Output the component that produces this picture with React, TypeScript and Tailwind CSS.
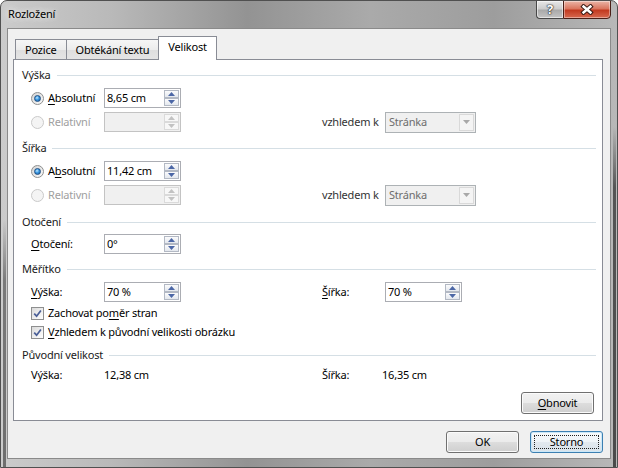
import React from "react";

type Kids = { children: React.ReactNode };

function Key({ children }: Kids) {
  return <span className="underline decoration-1 underline-offset-[2px]">{children}</span>;
}

function Arrow({ up, color }: { up?: boolean; color: string }) {
  return (
    <svg width="7" height="4" viewBox="0 0 7 4" className="block">
      <path d={up ? "M3.5 0L7 4H0Z" : "M0 0H7L3.5 4Z"} fill={color} />
    </svg>
  );
}

function SpinBox({ value, disabled }: { value?: string; disabled?: boolean }) {
  const arrow = disabled ? "#c2c2c2" : "#4c67a6";
  const half = disabled
    ? "flex flex-1 items-center justify-center border border-[#dadada] bg-[#f7f7f7]"
    : "flex flex-1 items-center justify-center border border-[#b3b9c4] bg-[linear-gradient(180deg,#fbfbfc,#e4e8ee)]";
  return (
    <div
      className={`flex h-[20px] w-[77px] border ${
        disabled ? "border-[#c3c3c3] bg-[#f0f0f0]" : "border-[#abadb3] bg-white"
      }`}
    >
      <div className="flex flex-1 items-center pl-[2px] text-black">{value}</div>
      <div className="flex w-[16px] flex-col py-px pr-px">
        <div className={half}>
          <Arrow up color={arrow} />
        </div>
        <div className={half}>
          <Arrow color={arrow} />
        </div>
      </div>
    </div>
  );
}

function Combo() {
  return (
    <div className="flex h-[21px] w-[91px] border border-[#adb2b5] bg-[#f0f0f0]">
      <div className="flex flex-1 items-center pl-[3px] text-[#6d6d6d]">Stránka</div>
      <div className="my-px mr-px flex w-[15px] items-center justify-center border border-[#d9d9d9] bg-[#f4f4f4]">
        <Arrow color="#a8a8a8" />
      </div>
    </div>
  );
}

function Radio({ on, disabled }: { on?: boolean; disabled?: boolean }) {
  return (
    <span
      className={`flex h-[13px] w-[13px] shrink-0 items-center justify-center rounded-full border ${
        disabled
          ? "border-[#cacaca] bg-[#f4f4f4]"
          : "border-[#8e8f8f] bg-[linear-gradient(135deg,#d4d4d4,#fbfbfb)]"
      }`}
    >
      {on && (
        <span className="h-[7px] w-[7px] rounded-full border border-[#1d4f85] bg-[radial-gradient(circle_at_40%_35%,#bfe8ff_0%,#3a97e0_45%,#14589c_100%)]" />
      )}
    </span>
  );
}

function Check() {
  return (
    <span className="flex h-[13px] w-[13px] shrink-0 items-center justify-center border border-[#8e8f8f] bg-[linear-gradient(135deg,#dadada,#ffffff)]">
      <svg width="9" height="9" viewBox="0 0 9 9" className="block">
        <path d="M1.2 4.6L3.6 7.2L7.9 1.4" fill="none" stroke="#4a5f97" strokeWidth="1.7" />
      </svg>
    </span>
  );
}

function Btn({ children, focused }: { children: React.ReactNode; focused?: boolean }) {
  return (
    <div
      className={`relative flex h-[22px] w-[73px] items-center justify-center rounded-[3px] border ${
        focused
          ? "border-[#3c7fb1] bg-[linear-gradient(180deg,#f7fafc_0%,#eef3f7_50%,#e2e9ef_50%,#d9e2ea_100%)] shadow-[inset_0_0_0_1px_#cbe8f8]"
          : "border-[#707070] bg-[linear-gradient(180deg,#f2f2f2_0%,#ebebeb_50%,#dddddd_50%,#cfcfcf_100%)] shadow-[inset_0_0_0_1px_#fbfbfb]"
      }`}
    >
      {focused && <span className="absolute inset-[3px] border border-dotted border-[#202020]" />}
      <span className="relative">{children}</span>
    </div>
  );
}

function Group({ title, className }: { title: string; className: string }) {
  return (
    <div className={`flex h-[16px] items-center pl-[8px] pr-[6px] ${className}`}>
      <span className="text-[#1a1a1a]">{title}</span>
      <span className="ml-[6px] h-px flex-1 bg-[#d5dfe5]" />
    </div>
  );
}

function Tab({ children, first }: { children: React.ReactNode; first?: boolean }) {
  return (
    <div
      className={`flex h-[20px] items-center border border-b-0 border-[#898c95] bg-[linear-gradient(180deg,#f6f6f6_0%,#ececec_50%,#dedede_50%,#e4e4e4_100%)] px-[9px] ${
        first ? "" : "-ml-px"
      }`}
    >
      {children}
    </div>
  );
}

export default function App() {
  return (
    <div className="flex h-[468px] w-[618px] flex-col overflow-hidden rounded-t-[7px] border border-[#505050] bg-[linear-gradient(180deg,transparent_27%,#555555_40%,#4a4a4a_100%),linear-gradient(180deg,transparent_47%,#7a7a7a_60%,#6e6e6e_100%),linear-gradient(90deg,#cbcbcb_0%,#b9b9b9_18%,#939393_40%,#aaaaaa_60%,#9d9d9d_80%,#b8b8b8_100%)] bg-no-repeat font-['Noto_Sans',sans-serif] text-[11px] leading-[16px] tracking-[-0.2px] text-black [background-position:right_1px_top,left_2px_top,0_0] [background-size:3px_100%,3px_100%,100%_100%]">
      {/* title bar */}
      <div className="flex h-[27px] shrink-0 items-start justify-between">
        <div className="pl-[7px] pt-[5px] [text-shadow:0_0_6px_rgba(255,255,255,0.9),0_0_10px_rgba(255,255,255,0.6)]">
          Rozložení
        </div>
        <div className="-mt-px mr-[6px] flex">
          <div className="flex h-[19px] w-[27px] items-center justify-center rounded-bl-[4px] border border-r-0 border-[#474747] bg-[linear-gradient(180deg,#e8e8e8_0%,#cdcdcd_45%,#aaaaaa_55%,#c4c4c4_100%)] shadow-[inset_0_0_0_1px_rgba(255,255,255,0.55)]">
            <span className="text-[13px] font-bold leading-none text-white [text-shadow:0_0_1px_#222,0_0_1px_#222,0_0_2px_#333]">
              ?
            </span>
          </div>
          <div className="flex h-[19px] w-[48px] items-center justify-center rounded-br-[4px] border border-[#4a1f17] bg-[linear-gradient(180deg,#ebb6a8_0%,#da765f_45%,#c23a20_55%,#d7694f_100%)] shadow-[inset_0_0_0_1px_rgba(255,255,255,0.4)]">
            <svg width="14" height="11" viewBox="0 0 14 11" className="block">
              <path d="M3.5 2.5L10.5 8.5M10.5 2.5L3.5 8.5" stroke="#3a1a14" strokeWidth="4.4" strokeLinecap="square" />
              <path d="M3.5 2.5L10.5 8.5M10.5 2.5L3.5 8.5" stroke="#ffffff" strokeWidth="2.4" strokeLinecap="square" />
            </svg>
          </div>
        </div>
      </div>

      {/* client area */}
      <div className="mx-[6px] mb-[8px] flex flex-1 flex-col border border-[#8a8a8a] bg-[#f0f0f0] pl-[5px] pr-[7px] pt-[7px]">
        <div className="flex h-[23px] items-end pl-[2px]">
          <Tab first>Pozice</Tab>
          <Tab>Obtékání textu</Tab>
          <div className="relative z-10 -mb-px -ml-px flex h-[24px] items-start border border-b-0 border-[#898c95] bg-white px-[9px] pt-[2px]">
            Velikost
          </div>
        </div>

        <div className="flex h-[362px] flex-col border border-[#898c95] bg-white">
          <Group title="Výška" className="mt-[7px]" />
          <div className="mt-[5px] flex h-[20px] items-center pl-[17px]">
            <div className="flex w-[73px] items-center gap-[4px]">
              <Radio on />
              <span>
                <Key>A</Key>bsolutní
              </span>
            </div>
            <SpinBox value="8,65 cm" />
          </div>
          <div className="mt-[4px] flex h-[20px] items-center pl-[17px]">
            <div className="flex w-[73px] items-center gap-[4px] text-[#a0a0a0]">
              <Radio disabled />
              <span>Relativní</span>
            </div>
            <div className="w-[218px]">
              <SpinBox disabled />
            </div>
            <div className="w-[63px] text-[#333333]">vzhledem k</div>
            <Combo />
          </div>

          <Group title="Šířka" className="mt-[8px]" />
          <div className="mt-[5px] flex h-[20px] items-center pl-[17px]">
            <div className="flex w-[73px] items-center gap-[4px]">
              <Radio on />
              <span>
                A<Key>b</Key>solutní
              </span>
            </div>
            <SpinBox value="11,42 cm" />
          </div>
          <div className="mt-[4px] flex h-[20px] items-center pl-[17px]">
            <div className="flex w-[73px] items-center gap-[4px] text-[#a0a0a0]">
              <Radio disabled />
              <span>Relativní</span>
            </div>
            <div className="w-[218px]">
              <SpinBox disabled />
            </div>
            <div className="w-[63px] text-[#333333]">vzhledem k</div>
            <Combo />
          </div>

          <Group title="Otočení" className="mt-[9px]" />
          <div className="mt-[4px] flex h-[20px] items-center pl-[17px]">
            <div className="w-[73px]">
              <Key>O</Key>točení:
            </div>
            <SpinBox value="0°" />
          </div>

          <Group title="Měřítko" className="mt-[7px]" />
          <div className="mt-[5px] flex h-[20px] items-center pl-[17px]">
            <div className="w-[73px]">
              <Key>V</Key>ýška:
            </div>
            <div className="w-[218px]">
              <SpinBox value="70 %" />
            </div>
            <div className="w-[63px]">
              <Key>Š</Key>ířka:
            </div>
            <SpinBox value="70 %" />
          </div>
          <div className="mt-[3px] flex h-[16px] items-center gap-[4px] pl-[17px]">
            <Check />
            <span>
              Zachovat po<Key>m</Key>ěr stran
            </span>
          </div>
          <div className="mt-[3px] flex h-[16px] items-center gap-[4px] pl-[17px]">
            <Check />
            <span>
              <Key>V</Key>zhledem k původní velikosti obrázku
            </span>
          </div>

          <Group title="Původní velikost" className="mt-[7px]" />
          <div className="mt-[4px] flex h-[16px] items-center pl-[17px]">
            <div className="w-[73px]">Výška:</div>
            <div className="w-[218px]">12,38 cm</div>
            <div className="w-[60px]">Šířka:</div>
            <div>16,35 cm</div>
          </div>

          <div className="mr-[8px] mt-[9px] self-end">
            <Btn>
              <Key>O</Key>bnovit
            </Btn>
          </div>
        </div>

        <div className="mt-[10px] flex justify-end gap-[11px]">
          <Btn>OK</Btn>
          <Btn focused>Storno</Btn>
        </div>
      </div>
    </div>
  );
}
